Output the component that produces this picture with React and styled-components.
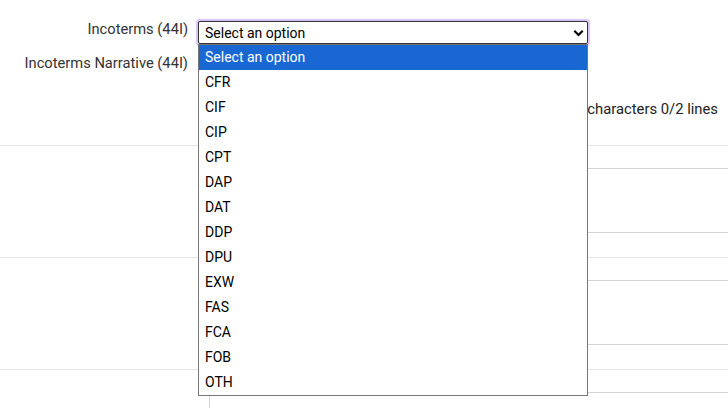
import React from "react";
import styled, { createGlobalStyle } from "styled-components";

const options = [
  "Select an option",
  "CFR",
  "CIF",
  "CIP",
  "CPT",
  "DAP",
  "DAT",
  "DDP",
  "DPU",
  "EXW",
  "FAS",
  "FCA",
  "FOB",
  "OTH",
];

const GlobalStyle = createGlobalStyle`
  body {
    margin: 0;
    background: #fff;
    font-family: Roboto, "Liberation Sans", Arial, sans-serif;
    color: #333;
  }
`;

const Page = styled.div`
  width: 728px;
  height: 408px;
  overflow: hidden;
  position: relative;
`;

const Header = styled.div`
  height: 145px;
  box-sizing: border-box;
  padding-top: 21px;
`;

const FieldGrid = styled.div`
  display: grid;
  grid-template-columns: 188px 390px;
  column-gap: 10px;
  row-gap: 11px;
  align-items: start;
`;

const Label = styled.label`
  text-align: right;
  font-size: 14.7px;
  line-height: 16px;
  color: #333;
`;

const SelectWrap = styled.div`
  position: relative;
`;

const SelectBox = styled.div`
  height: 23px;
  box-sizing: border-box;
  border: 1px solid #333;
  border-radius: 2px;
  box-shadow: 0 0 1px 2px #d6c2f7;
  display: flex;
  align-items: center;
  justify-content: space-between;
  padding: 0 3px 0 6px;
  font-size: 14px;
  color: #000;
  background: #fff;
`;

const Menu = styled.ul`
  position: absolute;
  top: 23px;
  left: 0;
  width: 390px;
  margin: 0;
  padding: 0;
  list-style: none;
  background: #fff;
  border: 1px solid #767676;
  box-sizing: border-box;
  z-index: 10;
`;

const Option = styled.li`
  height: 25px;
  line-height: 25px;
  padding-left: 6px;
  font-size: 14px;
  color: ${(p) => (p.$active ? "#fff" : "#000")};
  background: ${(p) => (p.$active ? "#1967d2" : "transparent")};
`;

const TextArea = styled.div`
  height: 40px;
  border: 1px solid #ccc;
  border-radius: 2px;
`;

const Counter = styled.div`
  text-align: right;
  padding-right: 10px;
  margin-top: 4px;
  font-size: 14.8px;
  line-height: 16px;
  color: #222;
`;

const Section = styled.div`
  display: grid;
  grid-template-columns: 209px 1fr;
  border-top: 1px solid #e5e5e5;
`;

const Side = styled.div`
  padding: 12px 16px;
`;

const Body = styled.div`
  border-left: 1px solid #d1d5db;
`;

const Row = styled.div`
  height: ${(p) => p.$h}px;
  border-bottom: ${(p) => (p.$line ? "1px solid #d1d5db" : "none")};
`;

const Chevron = () => (
  <svg width="11" height="8" viewBox="0 0 11 8">
    <path d="M1.3 1.8 L5.5 6 L9.7 1.8" fill="none" stroke="#000" strokeWidth="2.2" />
  </svg>
);

export default function App() {
  return (
    <Page>
      <GlobalStyle />
      <Header>
        <FieldGrid>
          <Label>Incoterms (44I)</Label>
          <SelectWrap>
            <SelectBox>
              <span>Select an option</span>
              <Chevron />
            </SelectBox>
            <Menu>
              {options.map((o, i) => (
                <Option key={o} $active={i === 0}>
                  {o}
                </Option>
              ))}
            </Menu>
          </SelectWrap>
          <Label>Incoterms Narrative (44I)</Label>
          <TextArea />
        </FieldGrid>
        <Counter>0/35 characters 0/2 lines</Counter>
      </Header>
      {[0, 1, 2].map((s) => (
        <Section key={s}>
          <Side />
          <Body>
            <Row $h={22} $line />
            <Row $h={63} $line />
            <Row $h={24} />
          </Body>
        </Section>
      ))}
    </Page>
  );
}
